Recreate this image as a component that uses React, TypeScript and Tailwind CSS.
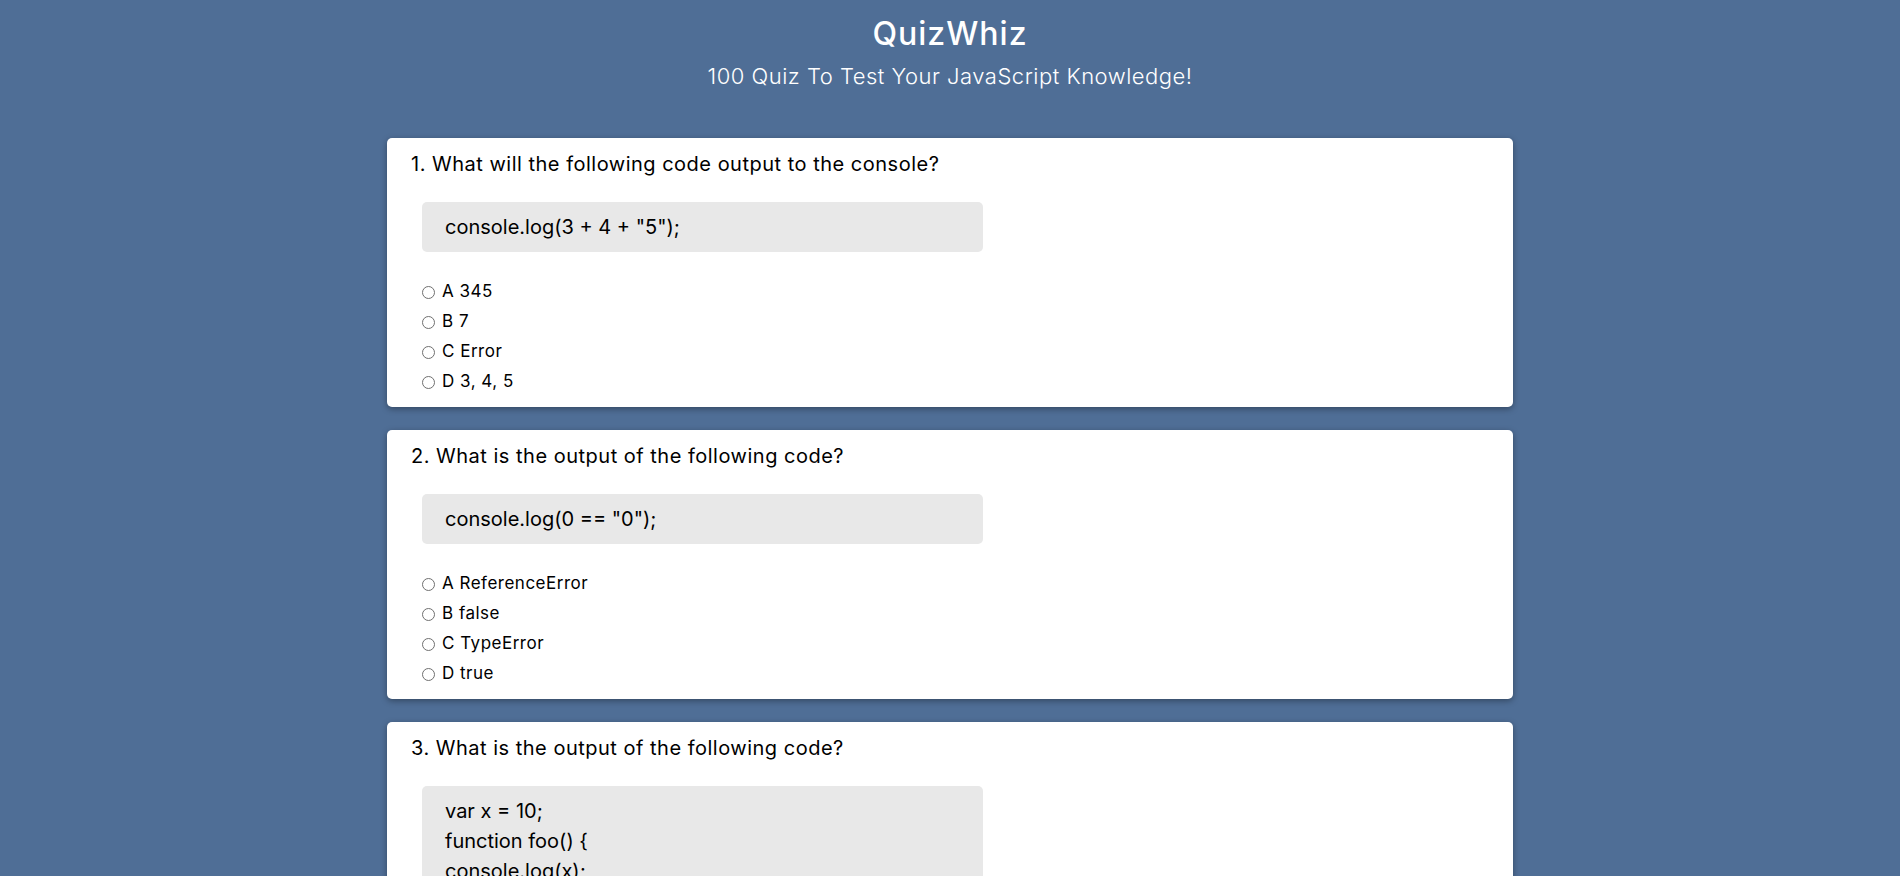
import React from "react";

type Q = { q: string; code: string[]; options: string[] };

const questions: Q[] = [
  {
    q: "1. What will the following code output to the console?",
    code: ['console.log(3 + 4 + "5");'],
    options: ["A 345", "B 7", "C Error", "D 3, 4, 5"],
  },
  {
    q: "2. What is the output of the following code?",
    code: ['console.log(0 == "0");'],
    options: ["A ReferenceError", "B false", "C TypeError", "D true"],
  },
  {
    q: "3. What is the output of the following code?",
    code: ["var x = 10;", "function foo() {", "console.log(x);", "var x = 20;", "}", "foo();"],
    options: ["A 10", "B 20", "C undefined", "D ReferenceError"],
  },
];

function Radio() {
  return (
    <span className="inline-block w-[13px] h-[13px] rounded-full border border-[#6f6f6f] bg-white shrink-0" />
  );
}

function Card({ item }: { item: Q }) {
  return (
    <div className="bg-white rounded-[5px] shadow-[0_2px_6px_rgba(0,0,0,0.35)] pt-[11px] pb-[10px] pl-[24px] pr-[24px]">
      <p className="text-[20px] leading-[30px] tracking-[0.5px] text-black">{item.q}</p>
      <div className="mt-[23px] ml-[11px] w-[561px] bg-[#e8e8e8] rounded-[5px] py-[10px] px-[23px] text-[20px] leading-[30px] text-black">
        {item.code.map((line, i) => (
          <div key={i}>{line}</div>
        ))}
      </div>
      <div className="mt-[25px] ml-[11px] flex flex-col">
        {item.options.map((o, i) => (
          <label key={i} className="flex items-center h-[30px] gap-[7px] text-[17px] tracking-[0.5px] text-black">
            <Radio />
            <span>{o}</span>
          </label>
        ))}
      </div>
    </div>
  );
}

export default function App() {
  return (
    <div className="min-h-screen bg-[#4f6e96] font-['Inter','Noto_Sans',sans-serif] overflow-hidden">
      <header className="text-center text-white pt-[10px]">
        <h1 className="text-[32px] font-medium leading-[48px] tracking-[1px]">QuizWhiz</h1>
        <p className="text-[22px] font-light leading-[33px] mt-[2px] tracking-[0.5px]">100 Quiz To Test Your JavaScript Knowledge!</p>
      </header>
      <main className="w-[1126px] mx-auto mt-[45px] flex flex-col gap-[23px] pb-10">
        {questions.map((q, i) => (
          <Card key={i} item={q} />
        ))}
      </main>
    </div>
  );
}
